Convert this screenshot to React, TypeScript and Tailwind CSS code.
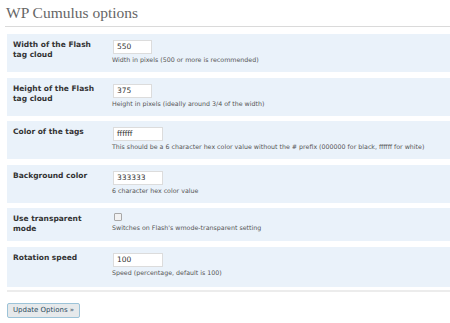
import React from 'react'

type Opt = {
  label: string
  value?: string
  wide?: boolean
  check?: boolean
  last?: boolean
  help: string
}

const options: Opt[] = [
  { label: 'Width of the Flash tag cloud', value: '550', help: 'Width in pixels (500 or more is recommended)' },
  { label: 'Height of the Flash tag cloud', value: '375', help: 'Height in pixels (ideally around 3/4 of the width)' },
  {
    label: 'Color of the tags',
    value: 'ffffff',
    wide: true,
    help: 'This should be a 6 character hex color value without the # prefix (000000 for black, ffffff for white)',
  },
  { label: 'Background color', value: '333333', wide: true, help: '6 character hex color value' },
  { label: 'Use transparent mode', check: true, help: "Switches on Flash's wmode-transparent setting" },
  { label: 'Rotation speed', value: '100', wide: true, last: true, help: 'Speed (percentage, default is 100)' },
]

const Row = ({ o }: { o: Opt }) => (
  <div className={'flex bg-[#eaf2fa] pl-[6px] pt-[6px] ' + (o.last ? 'pb-[9px]' : 'pb-[7px]')}>
    <div className="w-[100px] shrink-0 pr-[8px] text-[7.5px] leading-[10px] font-bold text-[#333]">
      {o.label}
    </div>
    <div className="flex flex-col items-start">
      {o.check ? (
        <span className="-mt-[1px] ml-[1px] block h-[8px] w-[8px] rounded-[1px] border border-[#a8a8a8] bg-[#f2f2f2]" />
      ) : (
        <div
          className={
            'h-[14px] border border-[#dcdcdc] bg-white pl-[3px] text-[7.5px] leading-[12px] text-[#333] ' +
            (o.wide ? 'w-[50px]' : 'w-[39px]')
          }
        >
          {o.value}
        </div>
      )}
      <div className={(o.check ? 'mt-[2px]' : 'mt-[1px]') + ' -ml-[1px] text-[6.3px] leading-[10px] text-[#555]'}>
        {o.help}
      </div>
    </div>
  </div>
)

export default function App() {
  return (
    <main className="h-[323px] w-[450px] overflow-hidden bg-white pt-[3px] font-['DejaVu_Sans',Verdana,sans-serif]">
      <h2 className="ml-[5px] border-b border-[#dadada] pl-[1px] pb-[3px] font-['Liberation_Serif',Georgia,serif] text-[15.5px] leading-[20px] text-[#666]">
        WP Cumulus options
      </h2>

      <div className="ml-[7px] mt-[7px] flex flex-col gap-[5.5px]">
        {options.map((o) => (
          <Row key={o.label} o={o} />
        ))}
      </div>

      <div className="ml-[7px] mt-[3px] h-[2px] bg-[#ececec]" />

      <div className="ml-[7px] mt-[11px] flex">
        <button className="h-[15px] rounded-[2px] border border-[#9cc3d8] bg-[#e6e9eb] px-[5px] text-[7px] leading-[13px] text-[#2d4b5e]">
          Update Options »
        </button>
      </div>
    </main>
  )
}
